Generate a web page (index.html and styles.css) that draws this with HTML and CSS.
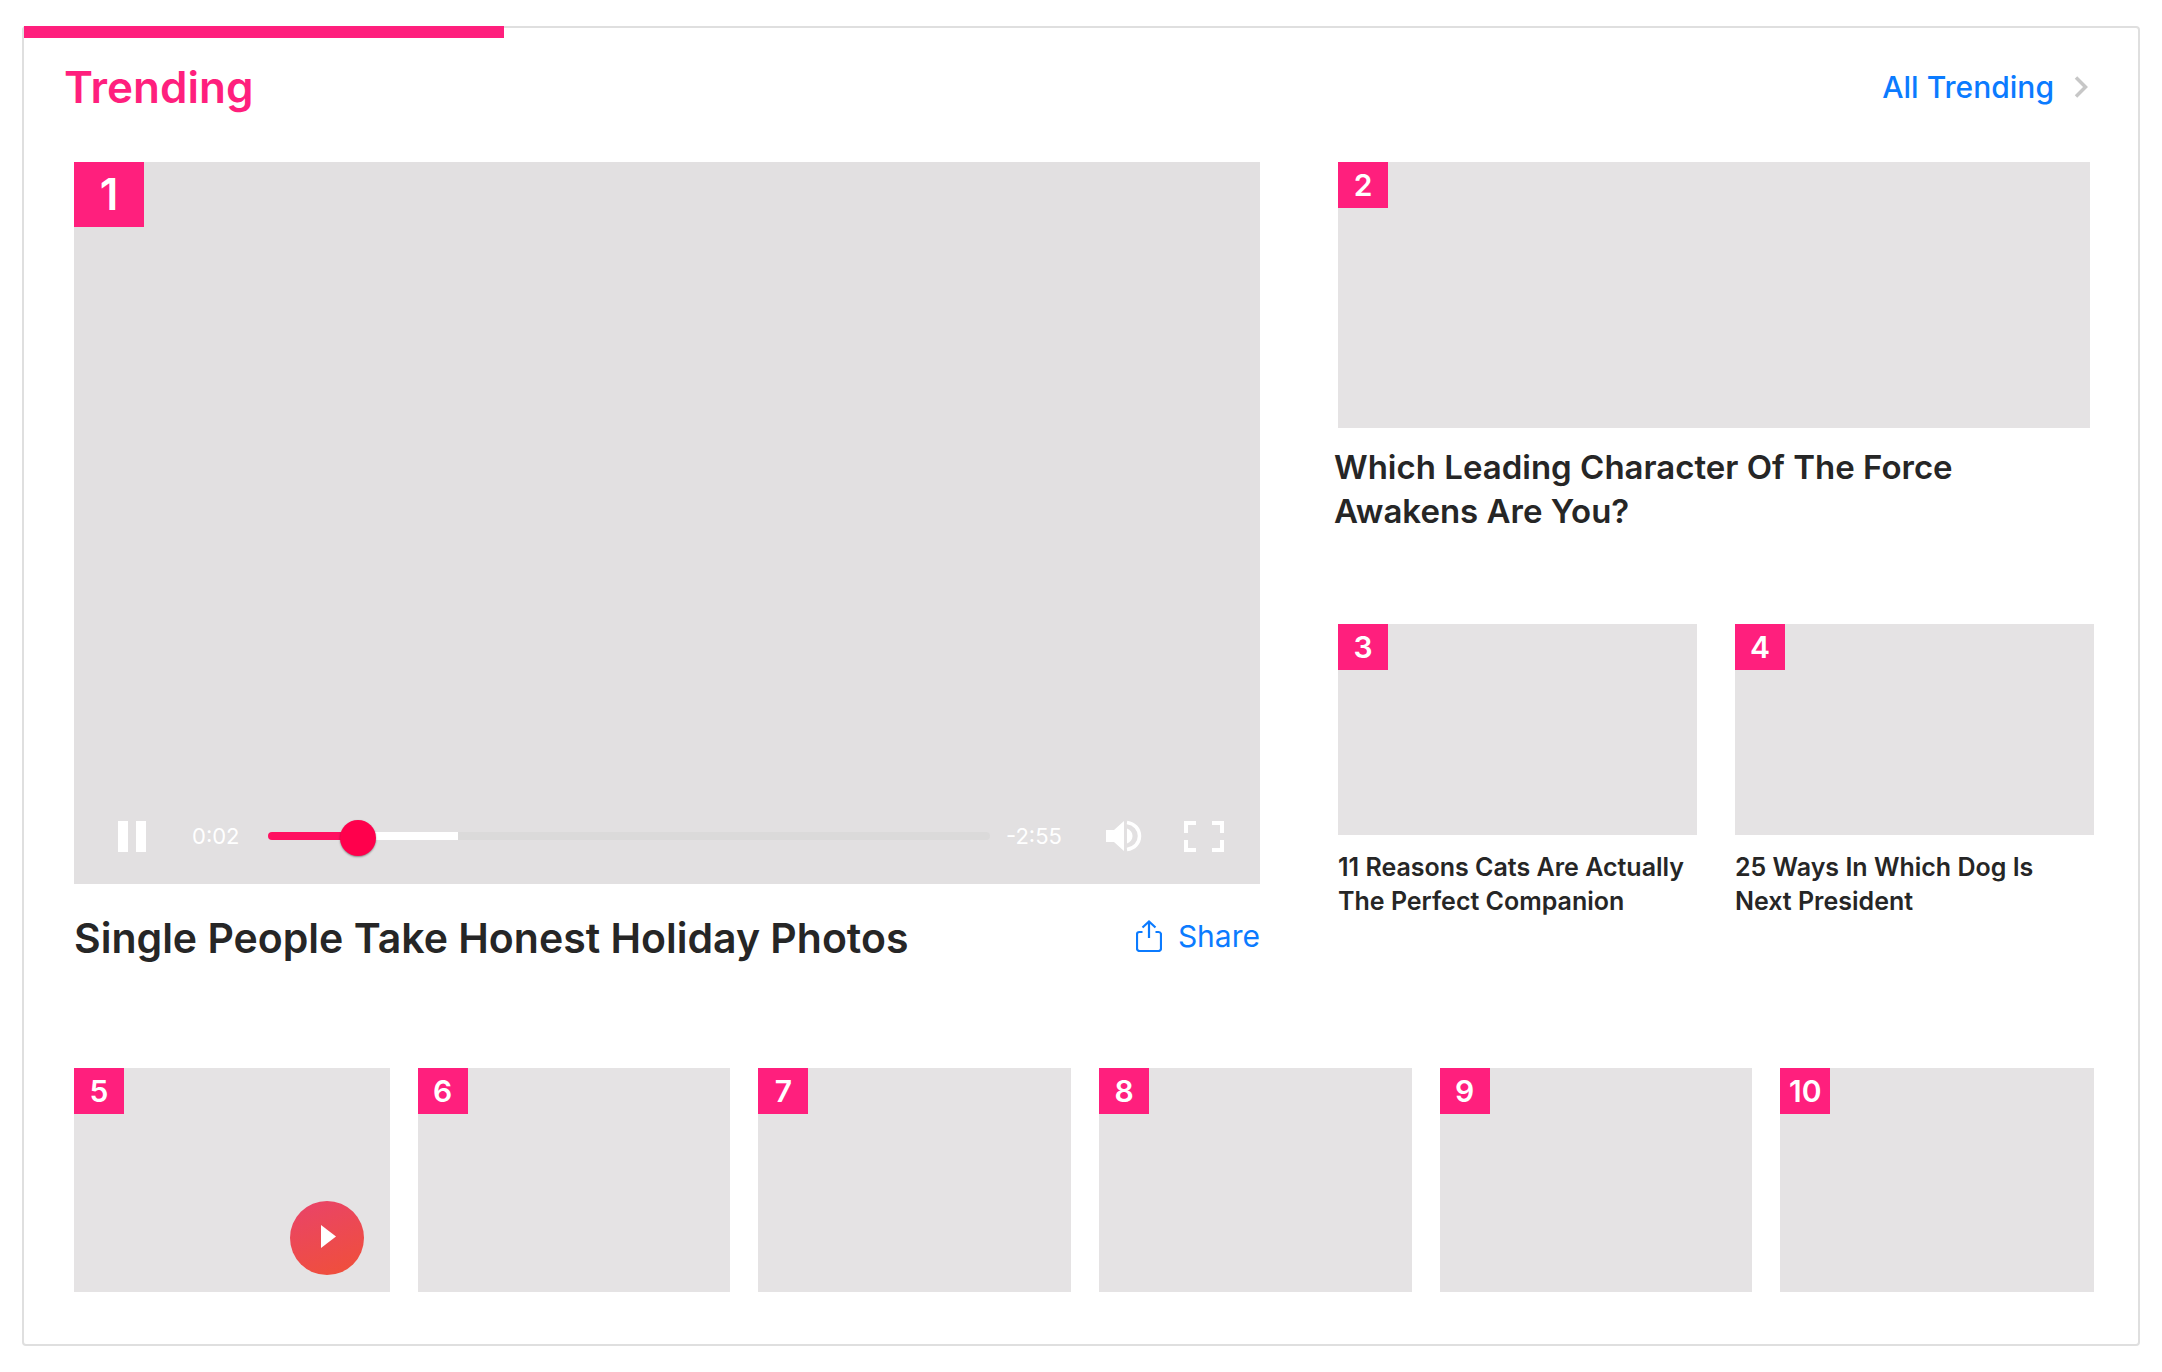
FILE: index.html
```html
<!DOCTYPE html>
<html lang="en">
<head>
<meta charset="utf-8">
<meta name="viewport" content="width=device-width, initial-scale=1">
<title>Trending</title>
<link rel="stylesheet" href="styles.css">
</head>
<body>
<main class="card">
  <header class="card-header">
    <h1 class="card-title">Trending</h1>
    <a class="all-link" href="#all">All Trending
      <svg class="chevron" viewBox="0 0 14 22" aria-hidden="true"><path d="M2 1.5 11.5 11 2 20.5" fill="none" stroke="currentColor" stroke-width="3.500"/></svg>
    </a>
  </header>

  <div class="stories">
    <div class="top">
      <article class="hero">
        <div class="thumb thumb-hero">
          <span class="rank rank-large">1</span>
          <div class="player">
            <button class="icon-button" type="button" aria-label="Pause">
              <svg width="28" height="31" viewBox="0 0 28 31"><path d="M0 0h10v31H0zM18 0h10v31H18z" fill="currentColor"/></svg>
            </button>
            <span class="time elapsed">0:02</span>
            <input class="seek" type="range" min="0" max="1000" value="105" aria-label="Seek" style="--played:12%;--loaded:26.3%">
            <span class="time remaining">-2:55</span>
            <button class="icon-button volume" type="button" aria-label="Mute">
              <svg width="36" height="32" viewBox="0 0 36 32"><path d="M0 10h8L18 1v30L8 22H0z" fill="currentColor"/><path d="M21 8.500c3.500 1.200 5.500 4 5.500 7.500s-2 6.300-5.500 7.500z" fill="currentColor"/><path d="M21 2.500c7.500 1 12.500 6.500 12.500 13.500S28.500 28.500 21 29.500" fill="none" stroke="currentColor" stroke-width="3.500"/></svg>
            </button>
            <button class="icon-button" type="button" aria-label="Full screen">
              <svg width="40" height="31" viewBox="0 0 40 31"><path d="M2 12V2h10M28 2h10v10M38 19v10H28M12 29H2V19" fill="none" stroke="currentColor" stroke-width="4"/></svg>
            </button>
          </div>
        </div>
        <div class="hero-caption">
          <h2 class="hero-title">Single People Take Honest Holiday Photos</h2>
          <button class="share" type="button">
            <svg width="26" height="32" viewBox="0 0 26 32" aria-hidden="true"><path d="M6.500 12H3.500Q1 12 1 14.500V28.500Q1 31 3.500 31H22.500Q25 31 25 28.500V14.500Q25 12 22.500 12H19.500M13 18V1.500M6.500 7.500 13 1.500 19.500 7.500" fill="none" stroke="currentColor" stroke-width="2.200"/></svg>
            Share
          </button>
        </div>
      </article>

      <div class="side">
        <article class="feature">
          <div class="thumb thumb-feature"><span class="rank">2</span></div>
          <h2 class="feature-title">Which Leading Character Of The Force Awakens Are You?</h2>
        </article>
        <div class="pair">
          <article>
            <div class="thumb thumb-small"><span class="rank">3</span></div>
            <h3 class="small-title">11 Reasons Cats Are Actually The Perfect Companion</h3>
          </article>
          <article>
            <div class="thumb thumb-small"><span class="rank">4</span></div>
            <h3 class="small-title">25 Ways In Which Dog Is Next President</h3>
          </article>
        </div>
      </div>
    </div>

    <div class="strip">
      <article class="thumb thumb-strip">
        <span class="rank">5</span>
        <button class="play" type="button" aria-label="Play">
          <svg width="15" height="23" viewBox="0 0 15 23"><path d="M0 0 15 11.500 0 23z" fill="currentColor"/></svg>
        </button>
      </article>
      <article class="thumb thumb-strip"><span class="rank">6</span></article>
      <article class="thumb thumb-strip"><span class="rank">7</span></article>
      <article class="thumb thumb-strip"><span class="rank">8</span></article>
      <article class="thumb thumb-strip"><span class="rank">9</span></article>
      <article class="thumb thumb-strip"><span class="rank">10</span></article>
    </div>
  </div>
</main>
</body>
</html>
```

FILE: styles.css
```css
* {
  box-sizing: border-box;
}

body {
  margin: 0;
  padding: 26px 22px;
  background: #fff;
  color: #262626;
  font-family: Inter, "Liberation Sans", sans-serif;
  font-weight: 600;
}

h1, h2, h3 {
  margin: 0;
  font-weight: inherit;
}

button {
  padding: 0;
  border: 0;
  background: none;
  color: inherit;
  font: inherit;
  cursor: pointer;
}

svg {
  display: block;
}

.card {
  position: relative;
  border: 2px solid #dfdfdf;
  border-radius: 4px;
  padding-bottom: 52px;
}

.card::before {
  content: "";
  position: absolute;
  top: -2px;
  left: 0;
  width: 480px;
  max-width: 100%;
  height: 12px;
  background: #ff1f7d;
}

.card-header {
  display: flex;
  justify-content: space-between;
  align-items: center;
  padding: 30px 50px 46px 40px;
}

.card-title {
  color: #ff1f7d;
  font-size: 44px;
  line-height: 58px;
}

.all-link {
  display: flex;
  align-items: center;
  gap: 20px;
  color: #0b7bff;
  font-size: 30px;
  font-weight: 500;
  line-height: 40px;
  text-decoration: none;
}

.chevron {
  width: 14px;
  height: 22px;
  color: #c7c7c7;
}

.stories {
  padding: 0 44px 0 50px;
}

.top {
  display: grid;
  grid-template-columns: 1186fr 756fr;
  gap: 78px;
  align-items: start;
}

.thumb {
  position: relative;
  min-width: 0;
  background: #e5e3e4;
}

.thumb-hero {
  display: flex;
  align-items: flex-end;
  aspect-ratio: 1186 / 722;
  background: #e2e0e1;
}

.thumb-feature {
  aspect-ratio: 752 / 266;
}

.thumb-small {
  aspect-ratio: 359 / 211;
}

/* The first thumbnail sets the row height; the others stretch to it. */
.thumb-strip:first-child {
  aspect-ratio: 316 / 224;
}

.rank {
  position: absolute;
  top: 0;
  left: 0;
  width: 50px;
  height: 46px;
  background: #ff1f7d;
  color: #fff;
  font-size: 30px;
  line-height: 46px;
  text-align: center;
}

.rank-large {
  width: 70px;
  height: 65px;
  font-size: 44px;
  line-height: 65px;
}

.player {
  display: flex;
  align-items: center;
  width: 100%;
  padding: 0 36px 30px 44px;
  color: #fff;
}

.time {
  font-size: 22px;
  font-weight: 400;
  line-height: 36px;
}

.elapsed {
  width: 76px;
  margin-left: 46px;
}

.remaining {
  width: 100px;
  padding-left: 16px;
}

.volume {
  margin: 0 42px 0 16px;
}

.seek {
  flex: 1;
  min-width: 0;
  height: 36px;
  margin: 0;
  background: none;
  appearance: none;
}

.seek::-webkit-slider-runnable-track {
  height: 8px;
  border-radius: 4px;
  background: linear-gradient(to right, #ff1060 var(--played), #fff var(--played) var(--loaded), #dbdada var(--loaded));
}

.seek::-webkit-slider-thumb {
  width: 36px;
  height: 36px;
  margin-top: -12px;
  border-radius: 50%;
  background: #ff004c;
  box-shadow: 0 1px 2px rgba(0, 0, 0, 0.4);
  appearance: none;
}

.hero-caption {
  display: flex;
  justify-content: space-between;
  align-items: flex-start;
  margin-top: 28px;
}

.hero-title {
  font-size: 41px;
  line-height: 52px;
}

.share {
  display: flex;
  align-items: center;
  gap: 16px;
  color: #0b7bff;
  font-size: 30px;
  font-weight: 400;
  line-height: 48px;
}

.side {
  display: grid;
  gap: 91px;
}

.thumb-feature {
  margin-right: 4px;
}

.feature-title {
  max-width: 700px;
  margin: 17px 0 0 -4px;
  font-size: 33px;
  line-height: 44px;
}

.pair {
  display: grid;
  grid-template-columns: 1fr 1fr;
  gap: 38px;
}

.small-title {
  margin-top: 15px;
  font-size: 25px;
  line-height: 34px;
}

.strip {
  display: grid;
  grid-template-columns: 316fr repeat(4, 313fr) 314fr;
  gap: 28px;
  margin-top: 104px;
}

.play {
  position: absolute;
  right: 26px;
  bottom: 17px;
  display: grid;
  place-items: center;
  width: 74px;
  height: 74px;
  padding: 0 0 2px 4px;
  border-radius: 50%;
  background: linear-gradient(160deg, #e9436a, #f05038);
  color: #fff;
}
```
